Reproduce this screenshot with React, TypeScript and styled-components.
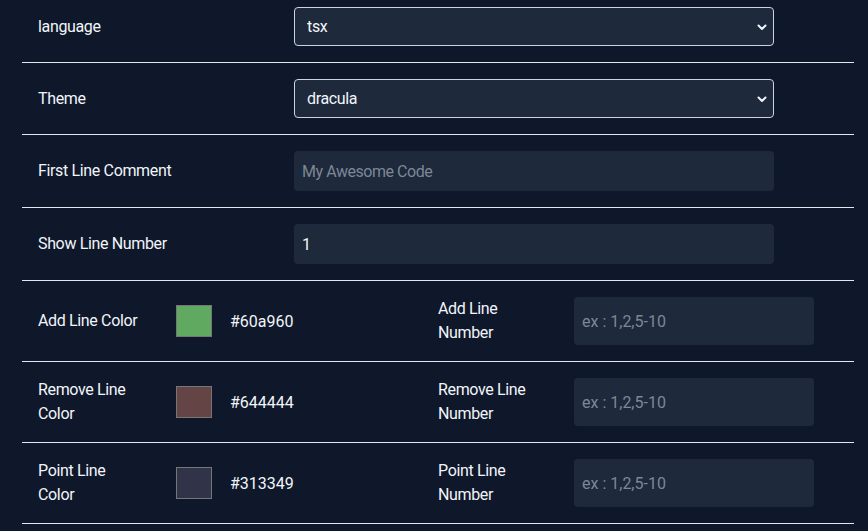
import styled, { createGlobalStyle } from 'styled-components';

const GlobalStyle = createGlobalStyle`
  html, body {
    margin: 0;
    padding: 0;
    background: #0f172a;
    color: #f1f5f9;
    font-family: Roboto, "Liberation Sans", sans-serif;
    font-size: 16px;
    letter-spacing: -0.35px;
  }
`;

const SettingsList = styled.div`
  width: 832px;
  margin: -9px 0 0 22px;
`;

const Row = styled.div`
  display: grid;
  grid-template-columns: 256px 480px;
  align-items: center;
  padding: 16px 16px;
  border-bottom: 1px solid #e2e8f0;
`;

const SplitRow = styled.div`
  display: grid;
  grid-template-columns: 400px 400px;
  align-items: center;
  padding: 16px 16px;
  border-bottom: 1px solid #e2e8f0;
`;

const Half = styled.div<{ $labelWidth: number }>`
  display: grid;
  grid-template-columns: ${(p) => p.$labelWidth}px 1fr;
  align-items: center;
`;

const Label = styled.label<{ $maxWidth?: number }>`
  line-height: 24px;
  color: #f1f5f9;
  max-width: ${(p) => (p.$maxWidth ? `${p.$maxWidth}px` : 'none')};
`;

const SelectWrap = styled.div`
  position: relative;
  width: 480px;
`;

const Select = styled.select`
  appearance: none;
  width: 100%;
  height: 39px;
  padding: 0 12px;
  font: inherit;
  letter-spacing: inherit;
  color: #f1f5f9;
  background: #1e293b;
  border: 1px solid #cbd5e1;
  border-radius: 4px;
  outline: none;
`;

const Chevron = styled.svg`
  position: absolute;
  right: 4px;
  top: 50%;
  transform: translateY(-50%);
  width: 16px;
  height: 16px;
  pointer-events: none;
`;

const TextInput = styled.input<{ $width: number; $height: number; $numeric?: boolean }>`
  box-sizing: border-box;
  width: ${(p) => p.$width}px;
  height: ${(p) => p.$height}px;
  padding: 0 8px;
  font: inherit;
  letter-spacing: ${(p) => (p.$numeric ? '0' : '-0.45px')};
  color: #f1f5f9;
  background: #1e293b;
  border: none;
  border-radius: 4px;
  outline: none;
  &::placeholder {
    color: #7d8797;
  }
`;

const ColorPick = styled.div`
  display: flex;
  align-items: center;
  gap: 18px;
`;

const Swatch = styled.input`
  appearance: none;
  box-sizing: border-box;
  width: 36px;
  height: 32px;
  padding: 0;
  border: 1px solid #767676;
  background: none;
  cursor: pointer;
  &::-webkit-color-swatch-wrapper {
    padding: 0;
  }
  &::-webkit-color-swatch {
    border: none;
  }
`;

const HexText = styled.span`
  color: #f1f5f9;
  letter-spacing: 0;
`;

const DownIcon = () => (
  <Chevron viewBox="0 0 16 16" fill="none">
    <path
      d="M4.5 6.5 8 10l3.5-3.5"
      stroke="#f1f5f9"
      strokeWidth="2"
      strokeLinecap="round"
      strokeLinejoin="round"
    />
  </Chevron>
);

const lineRows = [
  { color: 'Add Line Color', hex: '#60a960', number: 'Add Line Number' },
  { color: 'Remove Line Color', hex: '#644444', number: 'Remove Line Number' },
  { color: 'Point Line Color', hex: '#313349', number: 'Point Line Number' },
];

export default function App() {
  return (
    <>
      <GlobalStyle />
      <SettingsList>
        <Row>
          <Label>language</Label>
          <SelectWrap>
            <Select defaultValue="tsx">
              <option value="tsx">tsx</option>
              <option value="jsx">jsx</option>
            </Select>
            <DownIcon />
          </SelectWrap>
        </Row>
        <Row>
          <Label>Theme</Label>
          <SelectWrap>
            <Select defaultValue="dracula">
              <option value="dracula">dracula</option>
              <option value="monokai">monokai</option>
            </Select>
            <DownIcon />
          </SelectWrap>
        </Row>
        <Row>
          <Label>First Line Comment</Label>
          <TextInput $width={480} $height={40} placeholder="My Awesome Code" />
        </Row>
        <Row>
          <Label>Show Line Number</Label>
          <TextInput $width={480} $height={40} $numeric defaultValue="1" />
        </Row>
        {lineRows.map((r) => (
          <SplitRow key={r.hex}>
            <Half $labelWidth={138}>
              <Label $maxWidth={104}>{r.color}</Label>
              <ColorPick>
                <Swatch type="color" defaultValue={r.hex} />
                <HexText>{r.hex}</HexText>
              </ColorPick>
            </Half>
            <Half $labelWidth={136}>
              <Label $maxWidth={104}>{r.number}</Label>
              <TextInput $width={240} $height={48} $numeric placeholder="ex : 1,2,5-10" />
            </Half>
          </SplitRow>
        ))}
      </SettingsList>
    </>
  );
}
